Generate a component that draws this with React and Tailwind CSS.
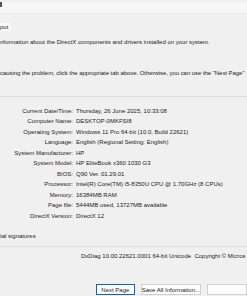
export default function App() {
  const rows = [
    ["Current Date/Time:", "Thursday, 26 June 2025, 10:33:08"],
    ["Computer Name:", "DESKTOP-0MKFSI8"],
    ["Operating System:", "Windows 11 Pro 64-bit (10.0, Build 22621)"],
    ["Language:", "English (Regional Setting: English)"],
    ["System Manufacturer:", "HP"],
    ["System Model:", "HP EliteBook x360 1030 G3"],
    ["BIOS:", "Q90 Ver. 01.29.01"],
    ["Processor:", "Intel(R) Core(TM) i5-8350U CPU @ 1.70GHz (8 CPUs)"],
    ["Memory:", "16384MB RAM"],
    ["Page file:", "5444MB used, 13727MB available"],
    ["DirectX Version:", "DirectX 12"],
  ];
  return (
    <div className="w-[247px] h-[296px] overflow-hidden bg-[#f0f0f0] text-[#1c1c1c] text-[6px] font-['Liberation_Sans',Arial,sans-serif] whitespace-nowrap">
      <div className="h-[12px] bg-[#f6f6f6] border-b border-[#ececec]">
        <div className="w-[1.5px] h-[5px] mt-[2px] bg-[#555]" />
      </div>
      <div className="h-[17px] pt-[9px]">
        <div className="w-[11px] h-[8px] bg-[#fafafa] leading-[8px]">put</div>
      </div>
      <div className="mt-[6px] h-[10px] leading-[10px]">
        nformation about the DirectX components and drivers installed on your system.
      </div>
      <div className="mt-[21px] h-[10px] leading-[10px] tracking-[-0.05px]">
        causing the problem, click the appropriate tab above. Otherwise, you can use the "Next Page"
      </div>
      <div className="mt-[18px] h-px bg-[#dcdcdc]" />
      <div className="mt-[8.75px] flex flex-col">
        {rows.map(([k, v]) => (
          <div key={k} className="flex h-[10.5px] leading-[10.5px]">
            <div className="w-[73px] text-right">{k}</div>
            <div className="pl-[3px]">{v}</div>
          </div>
        ))}
      </div>
      <div className="mt-[9.75px] h-[10px] leading-[10px]">tal signatures</div>
      <div className="mt-[5px] h-px bg-[#dcdcdc]" />
      <div className="mt-[4px] h-[10px] leading-[10px] pl-[81px] overflow-hidden">
        DxDiag 10.00.22621.0001 64-bit Unicode&nbsp; Copyright © Micros
      </div>
      <div className="mt-[23px] flex h-[11px]">
        <div className="ml-[96px] w-[71px] h-[11px] border border-[#0a64c8] bg-[#fdfdfd] flex items-center justify-center leading-none">
          Next Page
        </div>
        <div className="ml-[6px] w-[66px] h-[11px] border border-[#d0d0d0] bg-[#fdfdfd] flex items-center justify-center leading-none">
          Save All Information...
        </div>
        <div className="ml-[6px] w-[40px] shrink-0 h-[11px] border border-[#d0d0d0] bg-[#fdfdfd]" />
      </div>
    </div>
  );
}
